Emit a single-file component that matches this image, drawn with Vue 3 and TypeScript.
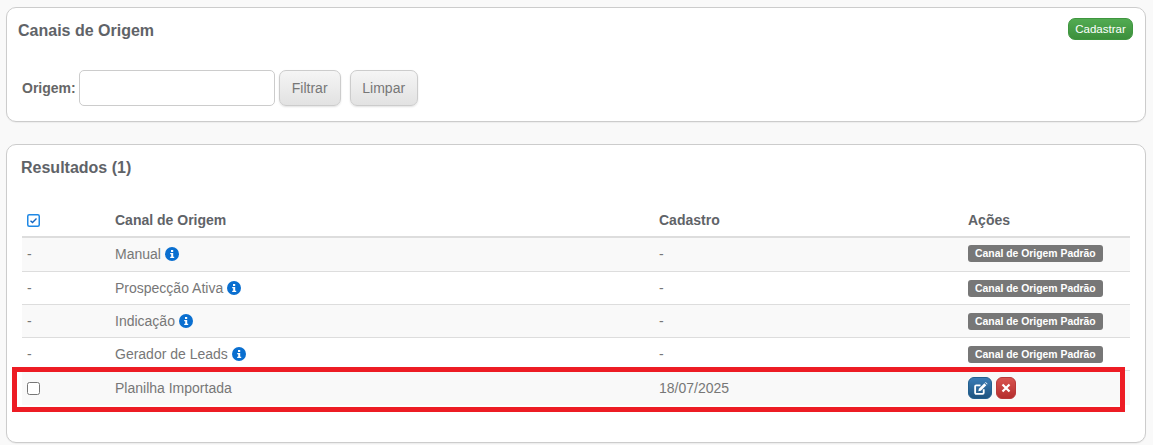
<script setup lang="ts">
interface Canal {
  id: number;
  nome: string;
  cadastro: string;
  padrao: boolean;
}

const canais: Canal[] = [
  { id: 1, nome: "Manual", cadastro: "-", padrao: true },
  { id: 2, nome: "Prospecção Ativa", cadastro: "-", padrao: true },
  { id: 3, nome: "Indicação", cadastro: "-", padrao: true },
  { id: 4, nome: "Gerador de Leads", cadastro: "-", padrao: true },
  { id: 5, nome: "Planilha Importada", cadastro: "18/07/2025", padrao: false },
];
</script>

<template>
  <div class="page">
    <section class="card card-filter">
      <div class="card-head">
        <h2 class="title">Canais de Origem</h2>
        <button class="btn-new" type="button">Cadastrar</button>
      </div>
      <form class="filter" @submit.prevent>
        <label class="filter-label" for="origem">Origem:</label>
        <input id="origem" class="filter-input" type="text" />
        <button class="btn-gray btn-filter" type="button">Filtrar</button>
        <button class="btn-gray btn-clear" type="button">Limpar</button>
      </form>
    </section>

    <section class="card card-results">
      <h2 class="title results-title">Resultados (1)</h2>
      <table class="grid">
        <colgroup>
          <col class="c1" />
          <col class="c2" />
          <col class="c3" />
          <col />
        </colgroup>
        <thead>
          <tr>
            <th>
              <svg class="check-all" width="13" height="13" viewBox="0 0 13 13">
                <rect x="0.75" y="0.75" width="11.5" height="11.5" rx="1.5" fill="#fff" stroke="#1e88e5" stroke-width="1.5" />
                <path d="M3.5 6.8 5.5 8.6 9.5 4.6" fill="none" stroke="#1565c0" stroke-width="1.4" />
              </svg>
            </th>
            <th>Canal de Origem</th>
            <th>Cadastro</th>
            <th>Ações</th>
          </tr>
        </thead>
        <tbody>
          <tr v-for="canal in canais" :key="canal.id">
            <td>
              <span v-if="canal.padrao">-</span>
              <input v-else class="row-check" type="checkbox" />
            </td>
            <td>
              {{ canal.nome }}
              <svg v-if="canal.padrao" class="info" width="14" height="14" viewBox="0 0 14 14">
                <circle cx="7" cy="7" r="7" fill="#0a6fd0" />
                <rect x="6" y="3" width="2.2" height="2" fill="#fff" />
                <path d="M5.2 6h3v3.8h1v1.2H5.2V9.8h1V7.2h-1z" fill="#fff" />
              </svg>
            </td>
            <td>{{ canal.cadastro }}</td>
            <td>
              <span v-if="canal.padrao" class="tag">Canal de Origem Padrão</span>
              <div v-else class="actions">
                <button class="btn-icon btn-edit" type="button" aria-label="Editar">
                  <svg width="15" height="15" viewBox="0 0 14 14">
                    <path d="M10 7.6V11a1 1 0 0 1-1 1H3a1 1 0 0 1-1-1V5a1 1 0 0 1 1-1h4" fill="none" stroke="#fff" stroke-width="1.7" />
                    <path d="M5.5 7.2 10.6 2.1l1.8 1.8-5.1 5.1-2.3.5z" fill="#fff" />
                    <path d="M11.3 1.4l.5-.5 1.8 1.8-.5.5z" fill="#fff" />
                  </svg>
                </button>
                <button class="btn-icon btn-del" type="button" aria-label="Excluir">
                  <svg width="10" height="10" viewBox="0 0 10 10">
                    <path d="M1.5 1.5l7 7M8.5 1.5l-7 7" stroke="#fff" stroke-width="2.2" />
                  </svg>
                </button>
              </div>
            </td>
          </tr>
        </tbody>
      </table>
    </section>

    <div class="highlight"></div>
  </div>
</template>

<style>
html,
body {
  margin: 0;
  background: #f9f9f9;
}
</style>

<style scoped>
.page {
  position: relative;
  width: 1153px;
  height: 445px;
  overflow: hidden;
  padding: 7px 7px 0 6px;
  box-sizing: border-box;
  font-family: "Liberation Sans", Arial, sans-serif;
  font-size: 14px;
  color: #666;
}

.card {
  background: #fff;
  border: 1px solid #ccc;
  border-radius: 10px;
  box-sizing: border-box;
  box-shadow: 0 1px 1px rgba(0, 0, 0, 0.05);
}

.card-filter {
  height: 115px;
  padding: 11px 12px 0 11px;
}

.card-results {
  height: 299px;
  margin-top: 22px;
  padding: 13px 15px 0 15px;
}

.card-head {
  display: flex;
  justify-content: space-between;
  align-items: flex-start;
}

.title {
  margin: 0;
  font-size: 16px;
  line-height: 22px;
  font-weight: bold;
  color: #5f6368;
}

.card-filter .title {
  margin-top: 1px;
}

.btn-new {
  width: 65px;
  height: 22px;
  margin-top: -1px;
  padding: 0;
  font-family: inherit;
  font-size: 11.5px;
  color: #fff;
  background: linear-gradient(#52ab52, #3c8f3c);
  border: 1px solid #3f963f;
  border-radius: 7px;
}

.filter {
  display: flex;
  align-items: center;
  margin-top: 28px;
  padding-left: 4px;
}

.filter-label {
  font-weight: bold;
  margin-right: 3px;
}

.filter-input {
  width: 196px;
  height: 36px;
  box-sizing: border-box;
  border: 1px solid #ccc;
  border-radius: 5px;
  background: #fff;
}

.btn-gray {
  height: 36px;
  margin-left: 4px;
  padding: 0;
  font-family: inherit;
  font-size: 14px;
  color: #777;
  background: linear-gradient(#f5f5f5, #e2e2e2);
  border: 1px solid #ccc;
  border-radius: 7px;
  box-shadow: 0 1px 2px rgba(0, 0, 0, 0.12);
}

.btn-filter {
  width: 62px;
}

.btn-clear {
  width: 68px;
  margin-left: 9px;
}

.results-title {
  line-height: 20px;
  margin-left: -1px;
}

.grid {
  width: 1108px;
  margin-top: 26px;
  border-collapse: collapse;
  table-layout: fixed;
}

.c1 {
  width: 88px;
}

.c2 {
  width: 544px;
}

.c3 {
  width: 309px;
}

th {
  height: 32px;
  padding: 0 5px;
  text-align: left;
  font-weight: bold;
  color: #5f6368;
  border-bottom: 2px solid #ddd;
}

td {
  height: 32px;
  padding: 0 5px;
  border-bottom: 1px solid #ddd;
  color: #777;
}

tbody tr:first-child td {
  height: 31px;
  padding-bottom: 2px;
}

tbody tr:nth-child(odd) td {
  background: #f9f9f9;
}

tbody tr:last-child td {
  border-bottom: 0;
  height: 34px;
}

.check-all {
  display: block;
}

.row-check {
  display: block;
  width: 13px;
  height: 13px;
  margin: 0;
}

.info {
  vertical-align: -2px;
}

.tag {
  display: inline-block;
  padding: 0 7px;
  font-size: 10.4px;
  line-height: 17px;
  font-weight: bold;
  color: #fff;
  background: #777;
  border-radius: 3px;
  vertical-align: middle;
}

.actions {
  display: flex;
  gap: 4px;
}

.btn-icon {
  display: flex;
  align-items: center;
  justify-content: center;
  height: 22px;
  padding: 0;
  border-radius: 6px;
}

.btn-edit {
  width: 24px;
  background: linear-gradient(#3a7cb5, #1f5480);
  border: 1px solid #23608f;
}

.btn-del {
  width: 20px;
  background: linear-gradient(#d9534f, #b52f2f);
  border: 1px solid #b93a3a;
}

.highlight {
  position: absolute;
  left: 12px;
  top: 367px;
  width: 1113px;
  height: 45px;
  box-sizing: border-box;
  border: 5px solid #ed1c24;
  pointer-events: none;
}
</style>
